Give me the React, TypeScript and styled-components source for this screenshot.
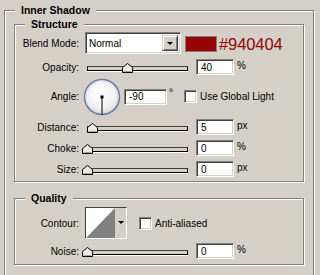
import React from 'react';
import styled, { createGlobalStyle } from 'styled-components';

// Photoshop "Inner Shadow" layer style panel, classic Windows look

const GlobalStyle = createGlobalStyle`
  html, body {
    margin: 0;
    padding: 0;
    background: #d4d0c8;
    overflow: hidden;
  }
  body {
    font-family: "Liberation Sans", Arial, sans-serif;
    font-size: 10px;
    color: #000;
  }
`;

const Page = styled.div`
  width: 320px;
  height: 275px;
  box-sizing: border-box;
  padding: 10px 0 0 4px;
  overflow: hidden;
`;

// etched group box: gray line with a white line one pixel further in
const Group = styled.div<{ $width: number; $height: number; $top?: number; $pad?: string }>`
  position: relative;
  box-sizing: border-box;
  width: ${(p) => p.$width}px;
  height: ${(p) => p.$height}px;
  margin-top: ${(p) => p.$top ?? 0}px;
  padding: ${(p) => p.$pad ?? '0'};
  border: 1px solid #808080;
  box-shadow: inset 1px 1px 0 #fff, 1px 1px 0 #fff;
`;

const Legend = styled.span`
  position: absolute;
  top: -7px;
  left: 10px;
  padding: 0 6px;
  background: #d4d0c8;
  font-weight: bold;
  font-size: 10.5px;
  line-height: 13px;
`;

const Row = styled.div<{ $top: number; $height: number }>`
  display: flex;
  align-items: center;
  margin-top: ${(p) => p.$top}px;
  height: ${(p) => p.$height}px;
`;

const Label = styled.span`
  width: 64px;
  text-align: right;
  flex-shrink: 0;
`;

const sunken = `
  box-sizing: border-box;
  border: 1px solid;
  border-color: #808080 #fff #fff #808080;
  box-shadow: inset 1px 1px 0 #404040, inset -1px -1px 0 #d4d0c8;
  background: #fff;
`;

const Select = styled.div`
  ${sunken}
  display: flex;
  align-items: stretch;
  width: 96px;
  height: 22px;
  margin-left: 6px;
  padding: 2px;
`;

const SelectText = styled.span`
  flex: 1;
  display: flex;
  align-items: center;
  padding-left: 1px;
`;

const DropButton = styled.span`
  box-sizing: border-box;
  width: 16px;
  display: flex;
  align-items: center;
  justify-content: center;
  background: #d4d0c8;
  border: 1px solid;
  border-color: #d4d0c8 #404040 #404040 #d4d0c8;
  box-shadow: inset 1px 1px 0 #fff, inset -1px -1px 0 #808080;
`;

const Arrow = styled.span<{ $size: number }>`
  width: 0;
  height: 0;
  border-left: ${(p) => p.$size}px solid transparent;
  border-right: ${(p) => p.$size}px solid transparent;
  border-top: ${(p) => p.$size}px solid #000;
`;

const Swatch = styled.div`
  box-sizing: border-box;
  width: 32px;
  height: 16px;
  margin-left: 4px;
  align-self: flex-start;
  margin-top: 4px;
  background: #940404;
  border: 1px solid #808080;
`;

const HexText = styled.span`
  margin-left: 2px;
  margin-top: 3px;
  font-size: 16.5px;
  color: #940404;
  letter-spacing: -0.1px;
`;

const Slider = styled.div`
  position: relative;
  width: 101px;
  height: 16px;
  margin-left: 8px;
`;

const Track = styled.div`
  box-sizing: border-box;
  margin-top: 7px;
  height: 5px;
  background: #d4d0c8;
  border: 1px solid #000;
  border-top-color: #404040;
  box-shadow: 0 1px 0 #fff;
`;

const Thumb = styled.svg`
  position: absolute;
  top: 4px;
`;

const NumberBox = styled.input<{ $width: number }>`
  ${sunken}
  width: ${(p) => p.$width}px;
  height: 16px;
  margin: 0 0 0 8px;
  padding: 0 0 0 4px;
  font-family: "Liberation Sans", Arial, sans-serif;
  font-size: 10px;
  color: #000;
  outline: none;
`;

const Unit = styled.span`
  margin-left: 3px;
  align-self: flex-start;
  line-height: 13px;
`;

const Dial = styled.svg`
  margin-left: 4px;
  flex-shrink: 0;
`;

const CheckBox = styled.span<{ $left: number }>`
  ${sunken}
  width: 13px;
  height: 13px;
  margin-left: ${(p) => p.$left}px;
`;

const CheckLabel = styled.span`
  margin-left: 3px;
`;

const ContourPicker = styled.div`
  box-sizing: border-box;
  display: flex;
  width: 42px;
  height: 32px;
  margin-left: 6px;
  border: 1px solid;
  border-color: #404040 #fff #fff #404040;
  background: #d4d0c8;
`;

const ContourArrow = styled.span`
  flex: 1;
  display: flex;
  justify-content: center;
  padding-top: 13px;
`;

const SliderField: React.FC<{ label: string; value: number; unit: string; top: number }> = ({
  label,
  value,
  unit,
  top,
}) => (
  <Row $top={top} $height={16}>
    <Label>{label}</Label>
    <Slider>
      <Track />
      <Thumb width="11" height="10" viewBox="0 0 11 10" style={{ left: value - 5 }}>
        <polygon points="0.5,9.5 0.5,4.5 5.5,0.5 10.5,4.5 10.5,9.5" fill="#ecebe8" stroke="#000" />
        <line x1="1.5" y1="8.5" x2="9.5" y2="8.5" stroke="#a0a0a0" />
      </Thumb>
    </Slider>
    <NumberBox $width={38} value={String(value)} readOnly />
    <Unit>{unit}</Unit>
  </Row>
);

const App: React.FC = () => {
  return (
    <>
      <GlobalStyle />
      <Page>
        <Group $width={310} $height={290} $pad="13px 9px 0 9px">
          <Legend>Inner Shadow</Legend>

          <Group $width={290} $height={158}>
            <Legend>Structure</Legend>
            <Row $top={7} $height={22}>
              <Label>Blend Mode:</Label>
              <Select>
                <SelectText>Normal</SelectText>
                <DropButton>
                  <Arrow $size={3.5} />
                </DropButton>
              </Select>
              <Swatch />
              <HexText>#940404</HexText>
            </Row>
            <SliderField label="Opacity:" value={40} unit="%" top={5} />
            <Row $top={3} $height={37}>
              <Label>Angle:</Label>
              <Dial width="38" height="38" viewBox="0 0 38 38">
                <defs>
                  <radialGradient id="dialFill" cx="45%" cy="40%" r="60%">
                    <stop offset="0%" stopColor="#ffffff" />
                    <stop offset="70%" stopColor="#f1f1f1" />
                    <stop offset="100%" stopColor="#d9dbe2" />
                  </radialGradient>
                </defs>
                <circle cx="19" cy="19" r="17.5" fill="url(#dialFill)" stroke="#6a7ca6" strokeWidth="1.5" />
                <circle cx="19" cy="19" r="16.2" fill="none" stroke="#c9cfdd" strokeWidth="0.8" />
                <line x1="19" y1="19" x2="19" y2="37" stroke="#000" strokeWidth="1" />
                <rect x="17.5" y="17.5" width="3" height="3" fill="#000" />
              </Dial>
              <NumberBox $width={43} value="-90" readOnly style={{ marginLeft: 3 }} />
              <Unit style={{ marginLeft: 2, marginTop: 8 }}>°</Unit>
              <CheckBox $left={11} />
              <CheckLabel>Use Global Light</CheckLabel>
            </Row>
            <SliderField label="Distance:" value={5} unit="px" top={4} />
            <SliderField label="Choke:" value={0} unit="%" top={5} />
            <SliderField label="Size:" value={0} unit="px" top={5} />
          </Group>

          <Group $width={290} $height={67} $top={16}>
            <Legend>Quality</Legend>
            <Row $top={8} $height={32}>
              <Label>Contour:</Label>
              <ContourPicker>
                <svg width="29" height="30" viewBox="0 0 29 30">
                  <rect x="0" y="0" width="29" height="30" fill="#fff" />
                  <polygon points="0,30 29,0 29,30" fill="#808080" />
                </svg>
                <ContourArrow>
                  <Arrow $size={3} />
                </ContourArrow>
              </ContourPicker>
              <CheckBox $left={12} />
              <CheckLabel>Anti-aliased</CheckLabel>
            </Row>
            <SliderField label="Noise:" value={0} unit="%" top={4} />
          </Group>
        </Group>
      </Page>
    </>
  );
};

export default App;
